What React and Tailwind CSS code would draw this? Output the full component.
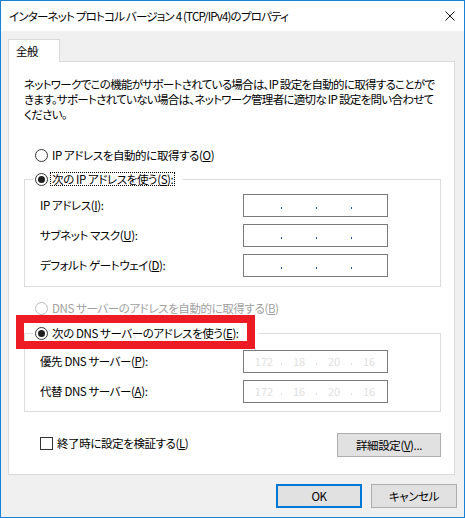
import React from 'react';

const Radio = ({ checked, disabled }) => (
    <span
        className={`w-[13px] h-[13px] rounded-full border bg-white flex items-center justify-center shrink-0 ${disabled ? 'border-[#bcbcbc]' : 'border-[#333333]'}`}
    >
        {checked && <span className="w-[7px] h-[7px] rounded-full bg-[#1f1f1f]" />}
    </span>
);

const IpBox = ({ values }) => (
    <div className="w-[145px] h-[23px] border border-[#7a7a7a] bg-white flex items-center pl-[3px]">
        {[0, 1, 2, 3].map((i) => (
            <React.Fragment key={i}>
                <span className="w-[34px] text-center text-[11px] leading-[13px] tracking-normal text-[#e0e0e0]">
                    {values ? values[i] : ''}
                </span>
                {i < 3 && (
                    <span className={`w-[1px] h-[2px] mt-[5px] ${values ? 'bg-[#e0e0e0]' : 'bg-[#24509a]'}`} />
                )}
            </React.Fragment>
        ))}
    </div>
);

const FieldRow = ({ label, values }) => (
    <div className="flex items-center h-[23px] pl-[7px]">
        <span className="w-[203px] leading-[15px]">{label}</span>
        <IpBox values={values} />
    </div>
);

const Btn = ({ children, primary, className = '' }) => (
    <button
        className={`h-[24px] flex items-center justify-center bg-[#e1e1e1] leading-[15px] ${primary ? 'border-2 border-[#0078d7]' : 'border border-[#adadad]'} ${className}`}
    >
        {children}
    </button>
);

export default function App() {
    return (
        <div className="relative w-[465px] h-[518px] border border-[#1a82d6] bg-[#f0f0f0] flex flex-col text-black text-[11.5px] leading-[15px] tracking-[-0.4px] font-['Noto_Sans_CJK_JP','Noto_Sans',sans-serif] [font-feature-settings:'palt']">
            {/* title bar */}
            <div className="h-[30px] bg-white flex items-center justify-between pl-[8px] pr-[9px] shrink-0">
                <span className="whitespace-nowrap tracking-[-0.8px]">
                    インターネット プロトコル バージョン 4 (TCP/IPv4)のプロパティ
                </span>
                <svg width="10" height="10" viewBox="0 0 10 10">
                    <path d="M0.5 0.5L9.5 9.5M9.5 0.5L0.5 9.5" stroke="#111" strokeWidth="1" fill="none" />
                </svg>
            </div>

            <div className="flex flex-col pl-[7px] pr-[9px] pt-[8px]">
                {/* tab */}
                <div className="flex h-[22px]">
                    <div className="relative z-10 w-[52px] h-[23px] bg-white border border-b-0 border-[#d9d9d9] pl-[7px] flex items-center">
                        全般
                    </div>
                </div>

                {/* panel */}
                <div className="h-[414px] bg-white border border-[#d9d9d9] pl-[15px] pr-[13px] pt-[15px] flex flex-col">
                    <p className="whitespace-nowrap tracking-[-0.7px]">
                        ネットワークでこの機能がサポートされている場合は、IP 設定を自動的に取得することがで
                        <br />
                        きます。サポートされていない場合は、ネットワーク管理者に適切な IP 設定を問い合わせて
                        <br />
                        ください。
                    </p>

                    <label className="flex items-center h-[16px] mt-[25px] pl-[11px]">
                        <Radio />
                        <span className="ml-[4px] whitespace-nowrap">
                            IP アドレスを自動的に取得する(<span className="underline">O</span>)
                        </span>
                    </label>

                    <fieldset className="mt-[8px] border border-[#dcdcdc] pl-[8px] pr-0 pt-[7px] pb-[9px] flex flex-col gap-[7px]">
                        <legend className="pl-[2px] pr-[8px] h-[16px]">
                            <span className="flex items-center h-[16px]">
                                <Radio checked />
                                <span className="ml-[2px] px-[1px] border border-dotted border-black leading-[12px] whitespace-nowrap">
                                    次の IP アドレスを使う(<span className="underline">S</span>):
                                </span>
                            </span>
                        </legend>
                        <FieldRow label={<>IP アドレス(<span className="underline">I</span>):</>} />
                        <FieldRow label={<>サブネット マスク(<span className="underline">U</span>):</>} />
                        <FieldRow label={<>デフォルト ゲートウェイ(<span className="underline">D</span>):</>} />
                    </fieldset>

                    <label className="flex items-center h-[16px] mt-[13px] pl-[11px] text-[#a0a0a0]">
                        <Radio disabled />
                        <span className="ml-[4px] whitespace-nowrap">
                            DNS サーバーのアドレスを自動的に取得する(<span className="underline">B</span>)
                        </span>
                    </label>

                    <fieldset className="mt-[9px] border border-[#dcdcdc] pl-[8px] pr-0 pt-[9px] pb-[8px] flex flex-col gap-[7px]">
                        <legend className="pl-[2px] pr-[20px] h-[16px]">
                            <span className="flex items-center h-[16px]">
                                <Radio checked />
                                <span className="ml-[4px] whitespace-nowrap">
                                    次の DNS サーバーのアドレスを使う(<span className="underline">E</span>):
                                </span>
                            </span>
                        </legend>
                        <FieldRow
                            label={<>優先 DNS サーバー(<span className="underline">P</span>):</>}
                            values={['172', '18', '20', '16']}
                        />
                        <FieldRow
                            label={<>代替 DNS サーバー(<span className="underline">A</span>):</>}
                            values={['172', '16', '20', '16']}
                        />
                    </fieldset>

                    <div className="mt-[21px] flex items-start justify-between">
                        <label className="flex items-center h-[16px] mt-[2px] pl-[16px]">
                            <span className="w-[13px] h-[13px] border border-[#333333] bg-white shrink-0" />
                            <span className="ml-[4px] whitespace-nowrap">
                                終了時に設定を検証する(<span className="underline">L</span>)
                            </span>
                        </label>
                        <Btn className="w-[104px]">
                            詳細設定(<span className="underline">V</span>)...
                        </Btn>
                    </div>
                </div>
            </div>

            {/* dialog buttons */}
            <div className="mt-[9px] flex justify-end gap-[9px] pr-[7px]">
                <Btn primary className="w-[86px]">OK</Btn>
                <Btn className="w-[86px]">キャンセル</Btn>
            </div>

            {/* red highlight */}
            <div className="absolute left-[15px] top-[314px] w-[239px] h-[34px] border-[8px] border-[#ed1c24] pointer-events-none" />
        </div>
    );
}
